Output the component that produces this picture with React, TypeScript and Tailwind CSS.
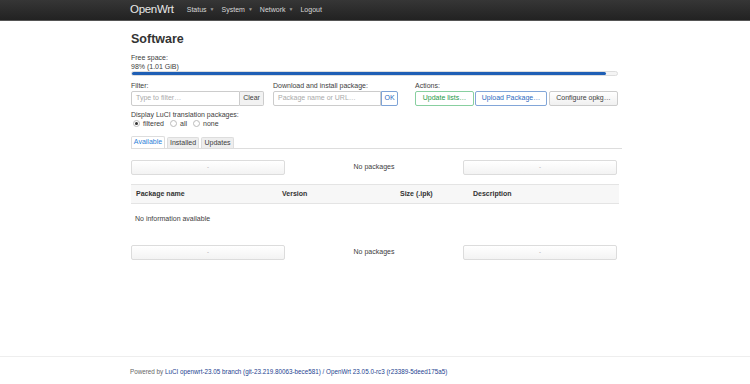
import { ReactNode } from 'react';

function NavItem({ label, caret = true }: { label: string; caret?: boolean }) {
  return (
    <span className="flex items-center gap-[3px] text-[7px] text-[#d8d8d8]">
      {label}
      {caret && <span className="text-[5px] text-[#999]">▼</span>}
    </span>
  );
}

function PagerButton() {
  return (
    <div className="flex h-[15px] w-[154px] items-center justify-center rounded-[2px] border border-[#dcdcdc] bg-gradient-to-b from-white to-[#f3f3f3] text-[6px] text-[#999]">
      -
    </div>
  );
}

function Pager() {
  return (
    <div className="flex w-[486px] items-center justify-between">
      <PagerButton />
      <span className="text-[7px] text-[#404040]">No packages</span>
      <PagerButton />
    </div>
  );
}

function Radio({ label, checked }: { label: string; checked?: boolean }) {
  return (
    <span className="flex items-center gap-[3px]">
      <span className="flex h-[7px] w-[7px] items-center justify-center rounded-full border border-[#bbb] bg-white">
        {checked && <span className="h-[3px] w-[3px] rounded-full bg-[#333]" />}
      </span>
      {label}
    </span>
  );
}

function ActionButton({ children, className }: { children: ReactNode; className: string }) {
  return (
    <div className={`flex h-[15px] items-center justify-center rounded-[2px] border text-[7px] ${className}`}>
      {children}
    </div>
  );
}

export default function App() {
  return (
    <div className="flex min-h-[384px] flex-col bg-white font-['Liberation_Sans',Arial,sans-serif] text-[#404040]">
      {/* Top bar */}
      <header className="h-[21px] border-b border-[#555] bg-gradient-to-b from-[#363636] to-[#222]">
        <div className="mx-auto flex h-full w-[490px] items-center">
          <span className="mr-[13px] text-[11.5px] tracking-[-0.3px] text-[#e8e8e8]">OpenWrt</span>
          <div className="flex items-center gap-[7px]">
            <NavItem label="Status" />
            <NavItem label="System" />
            <NavItem label="Network" />
            <NavItem label="Logout" caret={false} />
          </div>
        </div>
      </header>

      <main className="mx-auto w-[488px] flex-1 pt-[11px]">
        <h2 className="text-[12.5px] font-bold leading-[15px] text-[#333]">Software</h2>

        <div className="mt-[6px] text-[7px] leading-[9px]">
          <div>Free space:</div>
          <div>98% (1.01 GiB)</div>
        </div>
        <div className="h-[5px] w-[487px] rounded-full border border-[#ddd] bg-[#f4f4f4]">
          <div className="h-full w-[97.8%] rounded-full bg-[#1f5fb5]" />
        </div>

        {/* Controls */}
        <div className="mt-[5px] flex text-[7px]">
          <div className="w-[142px]">
            <div className="leading-[9px]">Filter:</div>
            <div className="mt-[1px] flex h-[15px] w-[133px]">
              <div className="flex flex-1 items-center rounded-l-[2px] border border-[#ccc] px-[4px] text-[#aaa]">
                Type to filter…
              </div>
              <div className="flex w-[24px] items-center justify-center rounded-r-[2px] border border-l-0 border-[#ccc] bg-[#f2f2f2] text-[#404040]">
                Clear
              </div>
            </div>
          </div>
          <div className="w-[142px]">
            <div className="leading-[9px]">Download and install package:</div>
            <div className="mt-[1px] flex h-[15px] w-[125px]">
              <div className="flex flex-1 items-center rounded-l-[2px] border border-[#ccc] px-[4px] text-[#aaa]">
                Package name or URL…
              </div>
              <div className="flex w-[17px] items-center justify-center rounded-r-[2px] border border-[#7ea3d6] bg-white text-[#2e6bbf]">
                OK
              </div>
            </div>
          </div>
          <div>
            <div className="leading-[9px]">Actions:</div>
            <div className="mt-[1px] flex gap-[1px]">
              <ActionButton className="w-[59px] border-[#88cfa0] bg-white text-[#1f9a48]">Update lists…</ActionButton>
              <ActionButton className="w-[72px] border-[#82a6d8] bg-white text-[#2e6bbf]">Upload Package…</ActionButton>
              <ActionButton className="ml-[1px] w-[69px] border-[#ccc] bg-gradient-to-b from-white to-[#f0f0f0] text-[#404040]">
                Configure opkg…
              </ActionButton>
            </div>
          </div>
        </div>

        <div className="mt-[4px] text-[7px] leading-[9px]">
          <div>Display LuCI translation packages:</div>
          <div className="flex items-center gap-[6px] pl-[2px]">
            <Radio label="filtered" checked />
            <Radio label="all" />
            <Radio label="none" />
          </div>
        </div>

        {/* Tabs */}
        <div className="mt-[9px] flex h-[12px] w-[491px] items-end gap-[2px] border-b border-[#ddd] text-[7px]">
          <div className="flex h-[12px] w-[34px] items-center justify-center rounded-t-[2px] border border-b-0 border-[#ddd] bg-white text-[#2f7fd8]">
            Available
          </div>
          <div className="flex h-[11px] w-[32px] items-center justify-center rounded-t-[2px] border border-b-0 border-[#ddd] bg-[#eee] text-[#404040]">
            Installed
          </div>
          <div className="flex h-[11px] w-[33px] items-center justify-center rounded-t-[2px] border border-b-0 border-[#ddd] bg-[#eee] text-[#404040]">
            Updates
          </div>
        </div>

        <div className="mt-[11px]">
          <Pager />
        </div>

        {/* Table */}
        <div className="mt-[9px] w-[488px] text-[7px]">
          <div className="flex h-[20px] items-center border-y border-[#e4e4e4] bg-[#f7f7f7] font-bold text-[#333]">
            <div className="w-[146px] pl-[5px]">Package name</div>
            <div className="w-[118px] pl-[5px]">Version</div>
            <div className="w-[73px] pl-[5px]">Size (.ipk)</div>
            <div className="pl-[5px]">Description</div>
          </div>
          <div className="flex h-[30px] items-center pl-[4px]">No information available</div>
        </div>

        <div className="mt-[11px]">
          <Pager />
        </div>
      </main>

      <footer className="mb-[8px] border-t border-[#eee] pt-[10px]">
        <div className="mx-auto w-[490px] text-[6.3px] leading-[9px]">
          <span className="text-[#666]">Powered by </span>
          <span className="text-[#1d3f8f]">
            LuCI openwrt-23.05 branch (git-23.219.80063-bece581) / OpenWrt 23.05.0-rc3 (r23389-5deed175a5)
          </span>
        </div>
      </footer>
    </div>
  );
}
